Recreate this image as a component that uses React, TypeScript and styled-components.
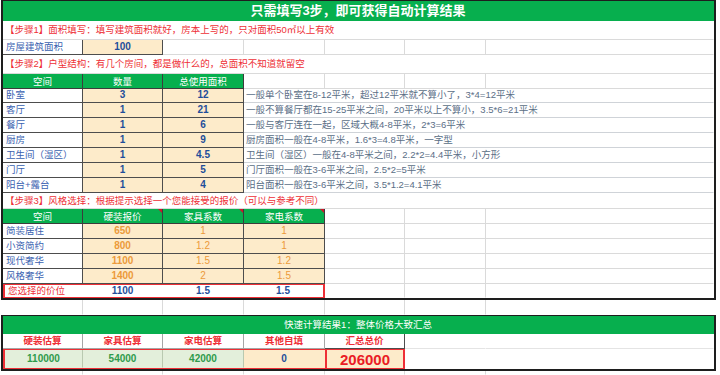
import styled, { createGlobalStyle, css } from 'styled-components';

// Column widths of the sheet (A..G), taken from the grid lines of the reference.
const COLS = '80px 80px 81px 81px 80px 81px 228px';

const GREEN = '#07af4e';
const PALE = '#fdebca';
const DARK = '#4d4d4d';
const GRID = '#dadada';
const RED = '#ee2f36';

const rooms = [
  ['卧室', '3', '12', '一般单个卧室在8-12平米，超过12平米就不算小了，3*4=12平米'],
  ['客厅', '1', '21', '一般不算餐厅都在15-25平米之间，20平米以上不算小，3.5*6=21平米'],
  ['餐厅', '1', '6', '一般与客厅连在一起，区域大概4-8平米，2*3=6平米'],
  ['厨房', '1', '9', '厨房面积一般在4-8平米，1.6*3=4.8平米，一字型'],
  ['卫生间（湿区）', '1', '4.5', '卫生间（湿区）一般在4-8平米之间，2.2*2=4.4平米，小方形'],
  ['门厅', '1', '5', '门厅面积一般在3-6平米之间，2.5*2=5平米'],
  ['阳台+露台', '1', '4', '阳台面积一般在3-6平米之间，3.5*1.2=4.1平米'],
];

const styles = [
  ['简装居住', '650', '1', '1'],
  ['小资简约', '800', '1.2', '1'],
  ['现代奢华', '1100', '1.5', '1.2'],
  ['风格奢华', '1400', '2', '1.5'],
];

const totals = [
  { label: '硬装估算', value: '110000' },
  { label: '家具估算', value: '54000' },
  { label: '家电估算', value: '42000' },
];

function App() {
  return (
    <Page>
      <GlobalStyle />
      <Box>
        <Row $h={20}>
          <Cell $span={7} $bg={GREEN} $color="#fff" $bold $size={13} $align="center" $line="transparent">
            只需填写3步，即可获得自动计算结果
          </Cell>
        </Row>

        <Row $h={19}>
          <Cell $span={7} $color={RED} $noRight>【步骤1】面积填写：填写建筑面积就好，房本上写的，只对面积50㎡以上有效</Cell>
        </Row>
        <Row $h={15}>
          <Cell $line={DARK} $color="#3a62b0" $left>房屋建筑面积</Cell>
          <Cell $line={DARK} $bg={PALE} $color="#1f4e9a" $bold $num $align="center">100</Cell>
          <Cell />
          <Cell />
          <Cell />
          <Cell />
          <Cell $noRight />
        </Row>

        <Row $h={19}>
          <Cell $span={7} $color={RED} $noRight>【步骤2】户型结构：有几个房间，都是做什么的，总面积不知道就留空</Cell>
        </Row>
        <Row $h={14}>
          <Head $left>空间</Head>
          <Head>数量</Head>
          <Head>总使用面积</Head>
          <Cell />
          <Cell />
          <Cell />
          <Cell $noRight />
        </Row>
        {rooms.map(([name, count, area, note]) => (
          <Row $h={15} key={name}>
            <Cell $line={DARK} $color="#3a62b0" $left>{name}</Cell>
            <Cell $line={DARK} $bg={PALE} $color="#1f4e9a" $bold $num $align="center">{count}</Cell>
            <Cell $line={DARK} $bg={PALE} $color="#1f4e9a" $bold $num $align="center">{area}</Cell>
            <Cell $span={4} $color="#5a6e86" $line="#cfd3d8" $noRight>{note}</Cell>
          </Row>
        ))}

        <Row $h={16}>
          <Cell $span={7} $color={RED} $noRight>【步骤3】风格选择：根据提示选择一个您能接受的报价（可以与参考不同）</Cell>
        </Row>
        <Row $h={15}>
          <Head $left>空间</Head>
          <Head $mark>硬装报价</Head>
          <Head $mark>家具系数</Head>
          <Head $mark>家电系数</Head>
          <Cell />
          <Cell />
          <Cell $noRight />
        </Row>
        {styles.map(([name, price, furniture, appliance]) => (
          <Row $h={15} key={name}>
            <Cell $line={DARK} $color="#3a62b0" $left>{name}</Cell>
            <Cell $line={DARK} $bg={PALE} $color="#ec9a3a" $bold $num $align="center">{price}</Cell>
            <Cell $line={DARK} $bg={PALE} $color="#ec9a3a" $num $align="center">{furniture}</Cell>
            <Cell $line={DARK} $bg={PALE} $color="#ec9a3a" $num $align="center">{appliance}</Cell>
            <Cell />
            <Cell />
            <Cell $noRight />
          </Row>
        ))}
        <Row $h={14}>
          <Frame $span={4} $cols="78px 80px 81px 79px">
            <Cell $color={RED} $left $line="transparent">您选择的价位</Cell>
            <Cell $color="#1f4e9a" $bold $num $align="center" $line="transparent">1100</Cell>
            <Cell $color="#1f4e9a" $bold $num $align="center" $line="transparent">1.5</Cell>
            <Cell $color="#1f4e9a" $bold $num $align="center" $line="transparent">1.5</Cell>
          </Frame>
          <Cell $bottom="transparent" />
          <Cell $bottom="transparent" />
          <Cell $noRight $bottom="transparent" />
        </Row>
      </Box>

      <Row $h={15} $pad>
        {Array.from({ length: 7 }, (_, i) => (
          <Cell key={i} $noRight={i === 6} $bottom="transparent" />
        ))}
      </Row>

      <Box>
        <Row $h={18}>
          <Cell $span={7} $bg={GREEN} $color="#fff" $size={9.5} $align="center" $line="transparent">
            快速计算结果1：整体价格大致汇总
          </Cell>
        </Row>
        <Row $h={15}>
          {totals.map((t) => (
            <Cell key={t.label} $line="#a6a6a6" $color={RED} $bold $align="center">{t.label}</Cell>
          ))}
          <Cell $line="#a6a6a6" $color={RED} $bold $align="center">其他自填</Cell>
          <Cell $line={DARK} $color={RED} $bold $align="center">汇总总价</Cell>
          <Cell $line="transparent" $bottom="#e4e4e4" />
          <Cell $noRight $bottom="#e4e4e4" />
        </Row>
        <Row $h={20}>
          <Frame $span={5} $cols="78px 80px 81px 81px 78px">
            {totals.map((t) => (
              <Cell key={t.value} $bg="#e3efdb" $color="#2e9b4c" $bold $num $align="center" $line="#b9c9b0" $bottom="transparent">
                {t.value}
              </Cell>
            ))}
            <Cell $bg={PALE} $color="#1f4e9a" $bold $num $align="center" $line="transparent">0</Cell>
            <Total>206000</Total>
          </Frame>
          <Cell $line="transparent" $bottom="transparent" />
          <Cell $noRight $bottom="transparent" />
        </Row>
      </Box>

      <Row $h={4} $pad>
        {Array.from({ length: 7 }, (_, i) => (
          <Cell key={i} $noRight={i === 6} $bottom="transparent" />
        ))}
      </Row>
    </Page>
  );
}

// Global Styles
const GlobalStyle = createGlobalStyle`
  body {
    margin: 0;
    background: #fff;
    font-family: "Liberation Sans", "Noto Sans CJK SC", sans-serif;
  }
`;

// Elements Styles

const Page = styled.div`
  width: 720px;
  height: 375px;
  overflow: hidden;
  padding-left: 1px;
  box-sizing: border-box;
`;

const Box = styled.div`
  width: max-content;
  border: 2px solid #1e1e1e;
  border-top-width: 1px;
  background: #fff;
`;

const Row = styled.div<{ $h: number; $pad?: boolean }>`
  display: grid;
  grid-template-columns: ${COLS};
  height: ${(p) => p.$h}px;
  ${(p) => p.$pad && 'padding: 0 2px;'}
`;

type CellProps = {
  $span?: number;
  $bg?: string;
  $color?: string;
  $bold?: boolean;
  $num?: boolean;
  $size?: number;
  $align?: 'left' | 'center';
  $line?: string;
  $bottom?: string;
  $noRight?: boolean;
  $left?: boolean;
};

const Cell = styled.div<CellProps>`
  grid-column: span ${(p) => p.$span ?? 1};
  display: flex;
  align-items: center;
  justify-content: ${(p) => (p.$align === 'center' ? 'center' : 'flex-start')};
  padding: 0 ${(p) => (p.$left ? 3 : 2)}px;
  box-sizing: border-box;
  min-width: 0;
  overflow: hidden;
  white-space: nowrap;
  background: ${(p) => p.$bg ?? 'transparent'};
  color: ${(p) => p.$color ?? '#222'};
  font-size: ${(p) => p.$size ?? (p.$num ? 10 : 9.5)}px;
  font-weight: ${(p) => (p.$bold ? 700 : 400)};
  line-height: 1;
  border-right: 1px solid ${(p) => (p.$noRight ? 'transparent' : p.$line ?? GRID)};
  border-bottom: 1px solid ${(p) => p.$bottom ?? p.$line ?? GRID};
`;

const Head = styled.div<{ $mark?: boolean; $left?: boolean }>`
  position: relative;
  display: flex;
  align-items: center;
  justify-content: center;
  background: ${GREEN};
  color: #fff;
  font-size: 9.5px;
  border-right: 1px solid #3c3c3c;
  border-bottom: 1px solid #3c3c3c;
  ${(p) =>
    p.$mark &&
    css`
      &::after {
        content: '';
        position: absolute;
        top: 0;
        right: 0;
        border-top: 4px solid #d0142a;
        border-left: 4px solid transparent;
      }
    `}
`;

const Frame = styled.div<{ $span: number; $cols: string }>`
  grid-column: span ${(p) => p.$span};
  display: grid;
  grid-template-columns: ${(p) => p.$cols};
  border: 2px solid ${RED};
  border-top-width: 1px;
  border-bottom-width: 1px;
`;

const Total = styled.div`
  display: flex;
  align-items: center;
  justify-content: center;
  background: ${PALE};
  color: #ea1c24;
  font-size: 15px;
  font-weight: 700;
  border-left: 2px solid ${RED};
`;

export default App;
